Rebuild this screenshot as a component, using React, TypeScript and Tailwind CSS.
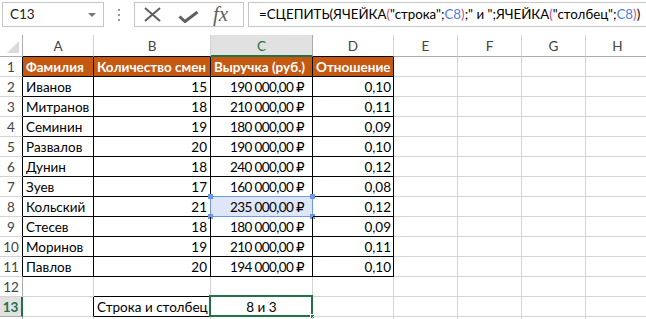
import { ReactNode } from 'react';

const font = { fontFamily: 'Lato, "DejaVu Sans", sans-serif' };

const cols = ['A', 'B', 'C', 'D', 'E', 'F', 'G', 'H'];

const data: [string, number, string, string][] = [
  ['Иванов', 15, '190 000,00 ₽', '0,10'],
  ['Митранов', 18, '210 000,00 ₽', '0,11'],
  ['Семинин', 19, '180 000,00 ₽', '0,09'],
  ['Развалов', 20, '190 000,00 ₽', '0,10'],
  ['Дунин', 18, '240 000,00 ₽', '0,12'],
  ['Зуев', 17, '160 000,00 ₽', '0,08'],
  ['Кольский', 21, '235 000,00 ₽', '0,12'],
  ['Стесев', 18, '180 000,00 ₽', '0,09'],
  ['Моринов', 19, '210 000,00 ₽', '0,11'],
  ['Павлов', 20, '194 000,00 ₽', '0,10'],
];

// cells with a thin black border: A1:D11 and B13:C13
const boxed = (r: number, c: number) =>
  (r >= 1 && r <= 11 && c >= 1 && c <= 4) || (r === 13 && (c === 2 || c === 3));

const Formula = () => {
  const pink = 'text-[#e0457b]';
  const blue = 'text-[#4a7fe6]';
  return (
    <span className="whitespace-nowrap text-[13.3px] text-black">
      =СЦЕПИТЬ(ЯЧЕЙКА<span className={pink}>(</span>"строка";<span className={blue}>C8</span>
      <span className={pink}>)</span>;" и ";ЯЧЕЙКА<span className={pink}>(</span>"столбец";
      <span className={blue}>C8</span>
      <span className={pink}>)</span>)
    </span>
  );
};

const Toolbar = () => (
  <div className="flex h-[35px] items-start pt-[2px]">
    <div className="ml-[2px] flex h-[25px] w-[102px] items-center justify-between border border-[#c6c6c6] pl-[7px] pr-[7px] text-[13.5px] text-[#222]">
      <span>C13</span>
      <span className="h-0 w-0 border-x-[4px] border-t-[4px] border-x-transparent border-t-[#777]" />
    </div>
    <div className="ml-[13px] flex h-[25px] w-[4px] flex-col items-center justify-center gap-[3px]">
      <span className="h-[2px] w-[2px] bg-[#999]" />
      <span className="h-[2px] w-[2px] bg-[#999]" />
      <span className="h-[2px] w-[2px] bg-[#999]" />
    </div>
    <div className="ml-[13px] flex h-[25px] w-[110px] items-center border border-[#c6c6c6]">
      <svg width="19" height="15" viewBox="0 0 19 15" className="ml-[8px]">
        <path d="M2 1 L17 14 M17 1 L2 14" stroke="#5f5f5f" strokeWidth="2" fill="none" />
      </svg>
      <svg width="21" height="12" viewBox="0 0 21 12" className="ml-[16px] mt-[4px]">
        <path d="M1.5 5.5 L7 10.5 L19.5 1" stroke="#5f5f5f" strokeWidth="3" fill="none" />
      </svg>
      <span
        className="ml-[14px] text-[21px] italic text-[#5f5f5f]"
        style={{ fontFamily: '"Liberation Serif", serif' }}
      >
        fx
      </span>
    </div>
    <div className="ml-[4px] flex h-[25px] flex-1 items-center overflow-hidden border border-r-0 border-[#c6c6c6] pl-[10px]">
      <Formula />
    </div>
  </div>
);

const HeaderRow = () => (
  <>
    <div className="relative h-[22px] border-b border-r border-[#ababab] bg-white">
      <svg width="12" height="12" viewBox="0 0 12 12" className="absolute bottom-[3px] right-[3px]">
        <path d="M12 0 L12 12 L0 12 Z" fill="#dadada" />
      </svg>
    </div>
    {cols.map((c, i) => {
      const sel = c === 'C';
      return (
        <div
          key={c}
          className={
            'flex h-[22px] items-center justify-center border-r pt-[2px] text-[13.5px] ' +
            (sel
              ? 'border-b-2 border-r-[#ababab] border-b-[#217346] bg-[#e1e1e1] text-[#217346]'
              : i < 4
                ? 'border-b border-r-[#d4d4d4] border-b-black bg-white text-[#444]'
                : 'border-b border-r-[#d4d4d4] border-b-[#ababab] bg-white text-[#444]')
          }
        >
          {c}
        </div>
      );
    })}
  </>
);

const cellContent = (r: number, c: number): { text: ReactNode; align: string } => {
  if (r === 1) {
    const h = ['Фамилия', 'Количество смен', 'Выручка (руб.)', 'Отношение'];
    return { text: h[c - 1] ?? '', align: 'justify-start pl-[3px]' };
  }
  if (r >= 2 && r <= 11) {
    const d = data[r - 2];
    if (c === 1) return { text: d[0], align: 'justify-start pl-[3px]' };
    if (c === 2) return { text: d[1], align: 'justify-end pr-[3px]' };
    if (c === 3) return { text: d[2], align: 'justify-end pr-[8px] tracking-[-0.6px]' };
    if (c === 4) return { text: d[3], align: 'justify-end pr-[2px]' };
  }
  if (r === 13) {
    if (c === 2) return { text: 'Строка и столбец', align: 'justify-start pl-[3px]' };
    if (c === 3) return { text: '8 и 3', align: 'justify-center' };
  }
  return { text: '', align: '' };
};

const Cell = ({ r, c }: { r: number; c: number }) => {
  const rightBlack = boxed(r, c) || boxed(r, c + 1);
  const bottomBlack = boxed(r, c) || boxed(r + 1, c);
  const { text, align } = cellContent(r, c);
  const head = r === 1 && c <= 4;
  const ref = r === 8 && c === 3;
  const active = r === 13 && c === 3;
  return (
    <div
      className={clsx(
        'relative flex h-[20px] items-center whitespace-nowrap border-b border-r pt-[2px] text-[13.5px]',
        rightBlack ? 'border-r-black' : 'border-r-[#d4d4d4]',
        bottomBlack ? 'border-b-black' : 'border-b-[#d4d4d4]',
        head ? 'bg-[#c65911] font-bold text-white' : 'text-black',
        ref && 'bg-[#dfe6f8]',
        align,
      )}
    >
      {text}
      {ref && (
        <>
          <span className="absolute -left-px -top-px bottom-[-1px] right-[-1px] border border-[#6c97e6]" />
          <span className="absolute -left-[3px] -top-[3px] h-[5px] w-[5px] bg-[#6c97e6]" />
          <span className="absolute -right-[3px] -top-[3px] h-[5px] w-[5px] bg-[#6c97e6]" />
          <span className="absolute -bottom-[3px] -left-[3px] h-[5px] w-[5px] bg-[#6c97e6]" />
          <span className="absolute -bottom-[3px] -right-[3px] h-[5px] w-[5px] bg-[#6c97e6]" />
        </>
      )}
      {active && (
        <>
          <span className="absolute -left-[2px] -top-[2px] bottom-[-1px] right-[-1px] border-2 border-[#217346]" />
          <span className="absolute -bottom-[3px] -right-[3px] h-[5px] w-[5px] border border-white bg-[#217346]" />
        </>
      )}
    </div>
  );
};

function clsx(...a: (string | false | undefined)[]) {
  return a.filter(Boolean).join(' ');
}

export default function App() {
  const rows = Array.from({ length: 14 }, (_, i) => i + 1);
  return (
    <div className="h-[319px] w-[646px] overflow-hidden bg-white" style={font}>
      <Toolbar />
      <div className="grid grid-cols-[23px_71px_117px_102px_81px_64px_64px_64px_64px]">
        <HeaderRow />
        {rows.map((r) => (
          <div key={r} className="contents">
            <div
              className={clsx(
                'flex h-[20px] items-center justify-center border-b pt-[2px] text-[13.5px]',
                r === 13
                  ? 'border-r-2 border-r-[#217346] border-b-[#ababab] bg-[#e1e1e1] font-bold text-[#217346]'
                  : 'border-r border-b-[#d4d4d4] text-[#444]',
                r !== 13 && (r <= 11 ? 'border-r-black' : 'border-r-[#ababab]'),
              )}
            >
              {r < 14 ? r : ''}
            </div>
            {cols.map((_, i) => (
              <Cell key={i} r={r} c={i + 1} />
            ))}
          </div>
        ))}
      </div>
    </div>
  );
}
